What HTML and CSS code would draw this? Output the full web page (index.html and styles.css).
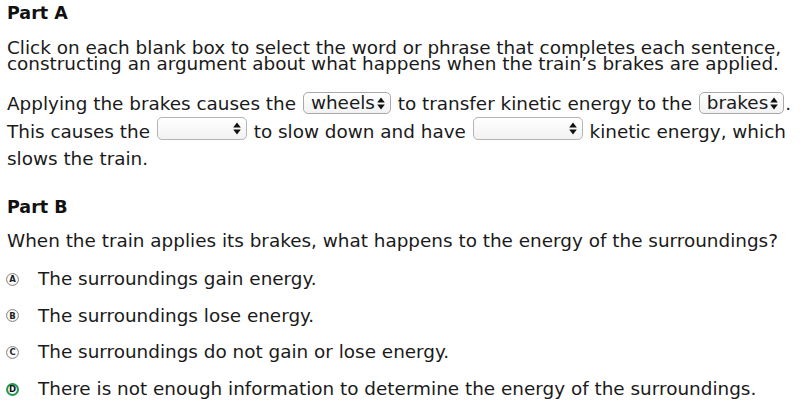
FILE: index.html
```html
<!DOCTYPE html>
<html>
<head>
<meta charset="utf-8">
<link rel="stylesheet" href="styles.css">
</head>
<body>
<div class="page">
  <h2 class="part">Part A</h2>
  <p class="instr">Click on each blank box to select the word or phrase that completes each sentence, constructing an argument about what happens when the train’s brakes are applied.</p>
  <p class="cloze">Applying the brakes causes the <span class="sel"><span class="val">wheels</span><span class="arr"><svg width="8" height="13" viewBox="0 0 8 13"><path d="M4 0.5L7.8 5.5H0.2Z M4 12.5L7.8 7.5H0.2Z" fill="#111"/></svg></span></span> to transfer kinetic energy to the <span class="sel"><span class="val">brakes</span><span class="arr"><svg width="8" height="13" viewBox="0 0 8 13"><path d="M4 0.5L7.8 5.5H0.2Z M4 12.5L7.8 7.5H0.2Z" fill="#111"/></svg></span></span>. This causes the <span class="sel empty w-e1"><span class="val">&nbsp;</span><span class="arr"><svg width="8" height="13" viewBox="0 0 8 13"><path d="M4 0.5L7.8 5.5H0.2Z M4 12.5L7.8 7.5H0.2Z" fill="#111"/></svg></span></span> to slow down and have <span class="sel empty w-e2"><span class="val">&nbsp;</span><span class="arr"><svg width="8" height="13" viewBox="0 0 8 13"><path d="M4 0.5L7.8 5.5H0.2Z M4 12.5L7.8 7.5H0.2Z" fill="#111"/></svg></span></span> kinetic energy, which slows the train.</p>
  <h2 class="part part-b">Part B</h2>
  <p class="question">When the train applies its brakes, what happens to the energy of the surroundings?</p>
  <ul class="options">
    <li class="opt"><span class="radio">A</span><span class="label">The surroundings gain energy.</span></li>
    <li class="opt"><span class="radio">B</span><span class="label">The surroundings lose energy.</span></li>
    <li class="opt"><span class="radio">C</span><span class="label">The surroundings do not gain or lose energy.</span></li>
    <li class="opt"><span class="radio checked">D</span><span class="label">There is not enough information to determine the energy of the surroundings.</span></li>
  </ul>
</div>
</body>
</html>
```
FILE: styles.css
```css
html, body {
  margin: 0;
  padding: 0;
  background: #ffffff;
}
.page {
  font-family: "DejaVu Sans", Verdana, sans-serif;
  color: #1a1a1a;
  font-size: 18.4px;
  padding: 3px 0 0 7px;
  width: 790px;
}
.part {
  font-size: 17.5px;
  font-weight: bold;
  margin: 0;
  line-height: 20px;
  color: #111;
}
.instr {
  margin: 16.5px 0 0 0;
  line-height: 16px;
}
.cloze {
  margin: 18.5px 0 0 0;
  line-height: 27px;
}
.sel {
  display: inline-flex;
  align-items: center;
  justify-content: space-between;
  box-sizing: border-box;
  height: 22px;
  vertical-align: 1px;
  line-height: 20px;
  padding: 0 5px 0 7px;
  border: 1px solid #a9a9a9;
  border-radius: 5px;
  background: linear-gradient(#ffffff, #f2f2f2);
  margin: 0 1px;
}
.val {
  line-height: 20px;
}
.arr {
  display: inline-flex;
  margin-left: 2px;
}
.empty {
  height: 23px;
  vertical-align: 3px;
  border-color: #b4b4b4;
}
.w-e1 {
  width: 90px;
}
.w-e2 {
  width: 110px;
}
.part-b {
  margin-top: 25px;
}
.question {
  margin: 14.5px 0 0 0;
  line-height: 20px;
}
.options {
  list-style: none;
  margin: 18px 0 0 0;
  padding: 0;
}
.opt {
  display: flex;
  align-items: center;
  height: 20px;
  margin-bottom: 16.7px;
}
.radio {
  box-sizing: border-box;
  width: 13px;
  height: 13px;
  border-radius: 50%;
  border: 1.5px solid #8a8a8a;
  box-shadow: inset 0 0 0 0.5px #ddd;
  display: flex;
  align-items: center;
  justify-content: center;
  font-size: 8.5px;
  font-weight: bold;
  color: #222;
  margin: 0 0 0 -1px;
  flex: none;
}
.radio.checked {
  border: 2px solid #1f9a4f;
  color: #111;
}
.label {
  margin-left: 19px;
  line-height: 20px;
}
```
